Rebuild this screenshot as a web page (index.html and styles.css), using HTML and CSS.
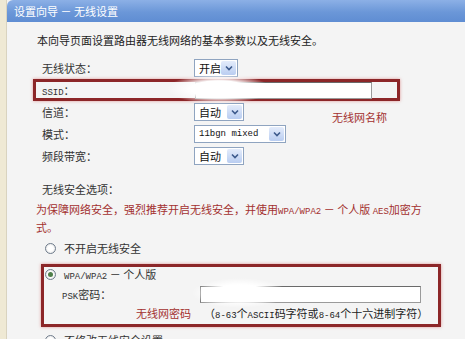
FILE: index.html
```html
<!DOCTYPE html>
<html lang="zh-CN">
<head>
  <meta charset="UTF-8">
  <title>设置向导 - 无线设置</title>
  <link rel="stylesheet" href="styles.css">
</head>
<body>
  <div class="page">
    <div class="title">设置向导 － 无线设置</div>
    <div class="intro">本向导页面设置路由器无线网络的基本参数以及无线安全。</div>

    <div class="form">
      <div class="row">
        <span class="label">无线状态：</span>
        <span class="sel w44"><span class="val">开启</span><span class="arr"><svg width="8" height="6" viewBox="0 0 8 6"><path d="M1 1.5 L4 4.5 L7 1.5" fill="none" stroke="#3d5a8c" stroke-width="1.6"/></svg></span></span>
      </div>
      <div class="row boxed">
        <span class="label"><span class="en">SSID</span>：</span>
        <span class="text w177"></span>
      </div>
      <div class="row">
        <span class="label">信道：</span>
        <span class="sel w50"><span class="val">自动</span><span class="arr"><svg width="8" height="6" viewBox="0 0 8 6"><path d="M1 1.5 L4 4.5 L7 1.5" fill="none" stroke="#3d5a8c" stroke-width="1.6"/></svg></span></span>
      </div>
      <div class="row">
        <span class="label">模式：</span>
        <span class="sel w92"><span class="val en">11bgn mixed</span><span class="arr"><svg width="8" height="6" viewBox="0 0 8 6"><path d="M1 1.5 L4 4.5 L7 1.5" fill="none" stroke="#3d5a8c" stroke-width="1.6"/></svg></span></span>
      </div>
      <div class="row">
        <span class="label">频段带宽：</span>
        <span class="sel w50"><span class="val">自动</span><span class="arr"><svg width="8" height="6" viewBox="0 0 8 6"><path d="M1 1.5 L4 4.5 L7 1.5" fill="none" stroke="#3d5a8c" stroke-width="1.6"/></svg></span></span>
      </div>
      <span class="mark name-mark">无线网名称</span>
    </div>

    <div class="sec-title">无线安全选项：</div>
    <div class="warn">为保障网络安全，强烈推荐开启无线安全，并使用<span class="en">WPA/WPA2</span> － 个人版 <span class="en">AES</span>加密方<br>式。</div>

    <div class="opt">
      <span class="radio"></span>
      <span>不开启无线安全</span>
    </div>

    <div class="secbox">
      <div class="opt">
        <span class="radio checked"></span>
        <span><span class="en">WPA/WPA2</span> － 个人版</span>
      </div>
      <div class="psk-row">
        <span class="psk-label"><span class="en">PSK</span>密码：</span>
        <span class="text w221"></span>
      </div>
      <div class="hint-row">
        <span class="mark">无线网密码</span>
        <span class="hint">（<span class="en">8-63</span>个<span class="en">ASCII</span>码字符或<span class="en">8-64</span>个十六进制字符）</span>
      </div>
    </div>

    <div class="opt">
      <span class="radio"></span>
      <span>不修改无线安全设置</span>
    </div>

    <!-- smudges covering the ssid and key -->
    <div class="blot blot-ssid"></div>
    <div class="blot blot-psk"></div>
  </div>
</body>
</html>
```

FILE: styles.css
```css
body {
  margin: 0;
  background-color: #efe9d4;
  font-family: "Noto Sans CJK SC", "Noto Sans", sans-serif;
  font-size: 11px;
  color: #2a2a2a;
  overflow: hidden;
}
.page {
  position: relative;
  margin-left: 6px;
  height: 100vh;
  background-color: #f4f4f4;
  border-left: 1px solid #d9d3bf;
}
.title {
  height: 22px;
  line-height: 22px;
  padding-left: 7px;
  color: #fff;
  background: linear-gradient(#8cb0e6, #6b97d8 55%, #5f8dd3);
  border-top-left-radius: 6px;
}
.intro {
  padding: 9px 0 8px 30px;
  line-height: 18px;
  color: #222;
}
.en {
  font-family: "Liberation Mono", monospace;
  font-size: 9px;
}
.form {
  position: relative;
  margin-left: 26px;
}
.row {
  display: flex;
  align-items: center;
  height: 22px;
  padding-left: 9px;
  box-sizing: border-box;
}
.row.boxed {
  width: 367px;
  padding-left: 6px;
  border: 3px solid #8c2628;
  box-shadow: 0 0 3px rgba(210, 90, 90, 0.6);
}
.label {
  width: 152px;
  color: #333;
}
.sel {
  display: inline-flex;
  align-items: center;
  height: 18px;
  box-sizing: border-box;
  border: 1px solid #8fa4c0;
  background-color: #fff;
}
.sel .val {
  flex: 1;
  padding-left: 4px;
  color: #111;
}
.sel .arr {
  display: flex;
  align-items: center;
  justify-content: center;
  width: 15px;
  height: 14px;
  margin-right: 1px;
  border-radius: 2px;
  background: linear-gradient(#e4ecfb, #b9cdf1);
}
.w44 { width: 44px; }
.w50 { width: 50px; }
.w92 { width: 92px; }
.text {
  display: inline-block;
  height: 17px;
  box-sizing: border-box;
  background-color: #fff;
  border: 1px solid #9a9a9a;
  border-top-color: #6a6a6a;
  border-left-color: #7a7a7a;
}
.w177 { width: 177px; margin-left: 1px; }
.w221 { width: 221px; }
.mark {
  color: #a3302f;
}
.name-mark {
  position: absolute;
  left: 299px;
  top: 52px;
}
.sec-title {
  margin-top: 13px;
  padding-left: 35px;
  line-height: 18px;
  color: #333;
}
.warn {
  margin-top: 4px;
  padding-left: 29px;
  line-height: 15px;
  color: #a3302f;
}
.opt {
  display: flex;
  align-items: center;
  gap: 8px;
  height: 16px;
  margin-top: 5px;
  padding-left: 38px;
  color: #333;
}
.radio {
  width: 9px;
  height: 9px;
  border-radius: 50%;
  border: 1px solid #6f7c8c;
  background: radial-gradient(#fff 40%, #d8d8d8);
  display: flex;
  align-items: center;
  justify-content: center;
}
.radio.checked::after {
  content: "";
  width: 5px;
  height: 5px;
  border-radius: 50%;
  background-color: #4f7f4a;
}
.secbox {
  width: 400px;
  margin: 8px 0 0 34px;
  box-sizing: border-box;
  border: 3px solid #8c2628;
  box-shadow: 0 0 3px rgba(210, 90, 90, 0.6);
  padding-bottom: 3px;
}
.secbox .opt {
  margin-top: 0;
  height: 14px;
  padding-left: 1px;
}
.psk-row {
  display: flex;
  align-items: center;
  height: 22px;
  margin-top: 2px;
  padding-left: 18px;
}
.psk-label {
  width: 138px;
  color: #333;
}
.hint-row {
  display: flex;
  align-items: center;
  height: 16px;
  padding-left: 92px;
}
.hint {
  margin-left: 13px;
  color: #222;
}
.blot {
  position: absolute;
  border-radius: 50%;
  background: radial-gradient(closest-side, #fff 55%, rgba(255, 255, 255, 0));
}
.blot-ssid {
  left: 160px;
  top: 74px;
  width: 104px;
  height: 30px;
}
.blot-psk {
  left: 185px;
  top: 278px;
  width: 95px;
  height: 30px;
}
```
